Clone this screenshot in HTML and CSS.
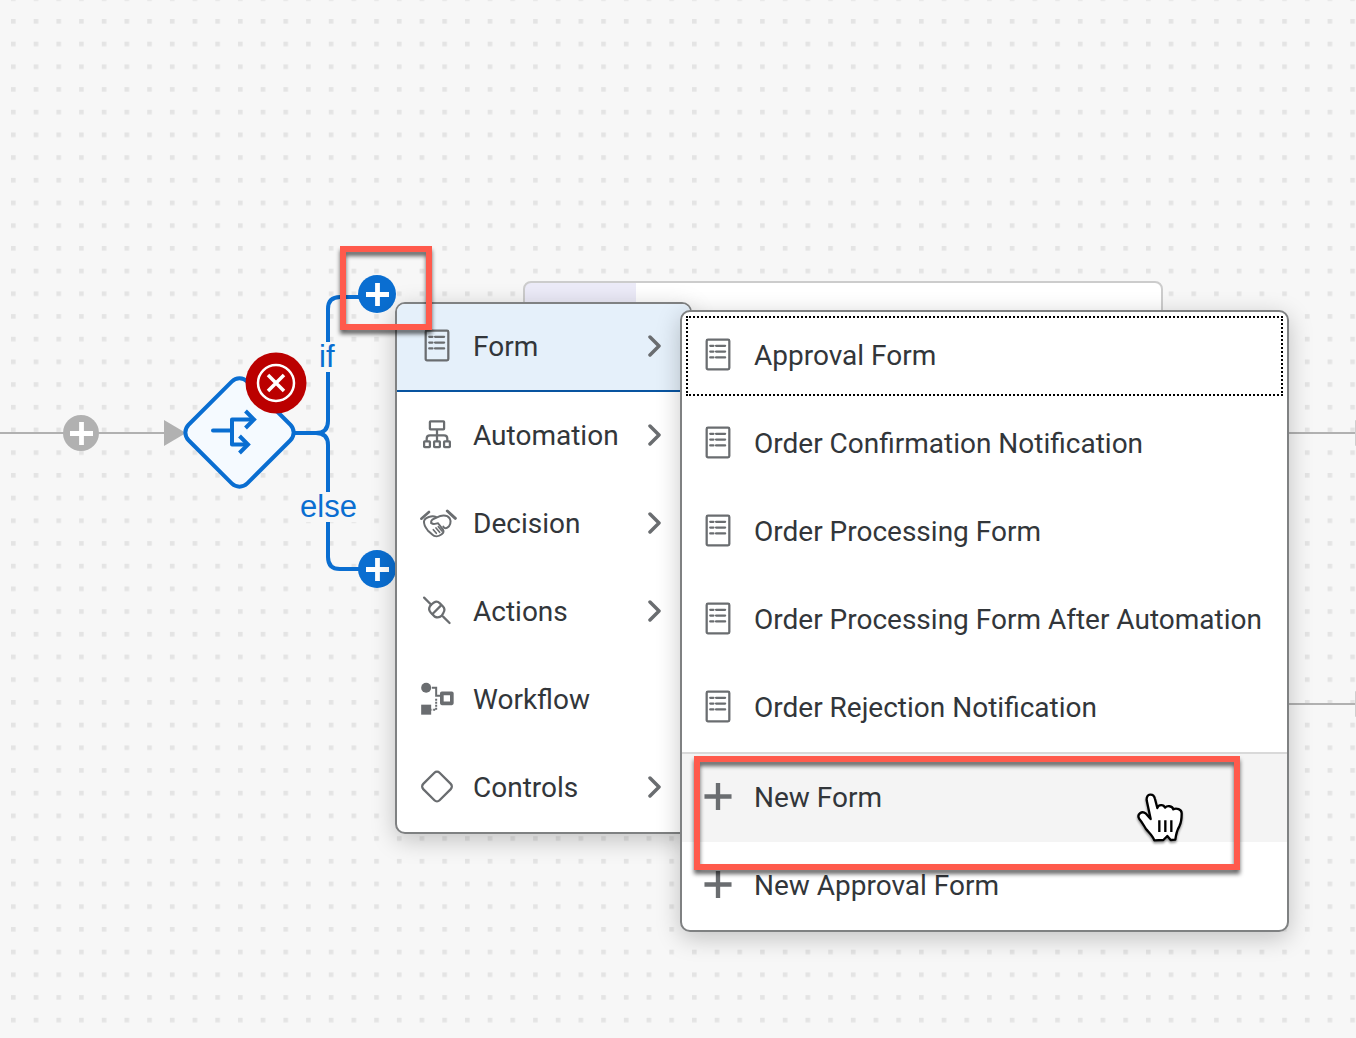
FILE: index.html
```html
<!DOCTYPE html>
<html lang="en">
<head>
<meta charset="utf-8">
<meta name="viewport" content="width=device-width, initial-scale=1">
<title>Process Builder</title>
<link rel="stylesheet" href="styles.css">
</head>
<body>
<svg class="sprite" aria-hidden="true">
  <symbol id="i-form" viewBox="0 0 78 102">
    <rect x="4" y="5" width="70" height="92" rx="4" fill="none" stroke="currentColor" stroke-width="7"/>
    <path d="M15 24h10M33 24h28M15 42h10M33 42h28M15 60h10M33 60h28" fill="none" stroke="currentColor" stroke-width="7" stroke-linecap="round"/>
  </symbol>
  <symbol id="i-automation" viewBox="0 0 90 90">
    <g fill="none" stroke="currentColor" stroke-width="7" stroke-linejoin="round">
      <rect x="23" y="4" width="44" height="25" rx="2"/>
      <path d="M45 29v37M13 66v-8q0-10 10-10h44q10 0 10 10v8"/>
      <rect x="5" y="66" width="18" height="18" rx="2"/>
      <rect x="36" y="66" width="18" height="18" rx="2"/>
      <rect x="67" y="66" width="18" height="18" rx="2"/>
    </g>
  </symbol>
  <symbol id="i-decision" viewBox="51 318 120 96">
    <g fill="none" stroke="currentColor" stroke-width="6" stroke-linecap="round" stroke-linejoin="round">
      <path d="M64 356L87 336" stroke-width="8"/>
      <path d="M142 333L166 355" stroke-width="9"/>
      <path d="M108 351C96 346 74 352 72 364C71 376 78 384 84 392L96 403C104 411 116 410 125 403C130 399 132 394 129 389L116 372"/>
      <path d="M94 369C90 360 102 356 111 352C122 346 140 342 149 355C155 366 150 378 142 383C137 386 133 385 130 380"/>
      <path d="M94 369C100 375 108 370 114 370"/>
      <path d="M100 389L109 400M108 384L119 397M115 380L126 393" stroke-width="5"/>
    </g>
  </symbol>
  <symbol id="i-actions" viewBox="0 0 90 90">
    <g fill="none" stroke="currentColor" stroke-width="7" stroke-linecap="round" stroke-linejoin="round">
      <path d="M5 5L27 27M64 64L84 84"/>
      <path d="M27 27L36 20Q45 14 54 23L63 32Q72 41 65 52L60 61Q50 70 38 64L26 52Q17 42 23 32Z"/>
      <path d="M57 30L31 56"/>
    </g>
  </symbol>
  <symbol id="i-workflow" viewBox="0 0 99 99">
    <circle cx="17" cy="17" r="15" fill="currentColor"/>
    <rect x="2" y="68" width="30" height="30" fill="currentColor"/>
    <rect x="64" y="34" width="30" height="30" fill="none" stroke="currentColor" stroke-width="11" stroke-linejoin="round"/>
    <path d="M34 17h13v24h14" fill="none" stroke="currentColor" stroke-width="6"/>
    <path d="M47 50v33h-14" fill="none" stroke="currentColor" stroke-width="6" stroke-dasharray="6 3"/>
  </symbol>
  <symbol id="i-controls" viewBox="0 0 100 100">
    <rect x="15" y="15" width="70" height="70" rx="11" transform="rotate(45 50 50)" fill="none" stroke="currentColor" stroke-width="7"/>
  </symbol>
  <symbol id="i-chevron" viewBox="0 0 14 24">
    <path d="M2 3L11 12L2 21" fill="none" stroke="currentColor" stroke-width="3.500" stroke-linecap="round" stroke-linejoin="round"/>
  </symbol>
  <symbol id="i-add" viewBox="0 0 30 30">
    <path d="M15 1v28M1 15h28" stroke="currentColor" stroke-width="4.500"/>
  </symbol>
  <symbol id="i-plus" viewBox="0 0 24 24">
    <path d="M12 0v24M0 12h24" stroke="currentColor" stroke-width="5"/>
  </symbol>
</svg>

<main class="canvas">
  <svg class="layer" aria-hidden="true">
    <defs>
      <pattern id="dots" width="227" height="227" patternUnits="userSpaceOnUse" patternTransform="translate(11 19) scale(.1)">
        <rect width="46" height="46" fill="#e4e4e4"/>
      </pattern>
    </defs>
    <rect width="100%" height="100%" fill="url(#dots)"/>
    <g stroke="#b1b1b1" stroke-width="2">
      <path d="M0 433H170M1280 433H1356M1280 704H1356"/>
    </g>
    <path d="M164 420L186 433L164 446Z" fill="#b1b1b1"/>
    <path d="M1355 420L1377 433L1355 446ZM1355 691L1377 704L1355 717Z" fill="#cfcfcf"/>
    <g fill="none" stroke="#0a6ed1" stroke-width="4">
      <path d="M293 433H316Q328 433 328 421V309Q328 297 340 297H362"/>
      <path d="M316 433Q328 433 328 445V557Q328 569 340 569H362"/>
    </g>
    <rect x="198" y="391" width="83" height="83" rx="11" transform="rotate(45 239.500 432.500)" fill="#f5faff" stroke="#0a6ed1" stroke-width="4"/>
    <g fill="none" stroke="#0a6ed1" stroke-width="4">
      <path d="M213 430.500H232" stroke-linecap="round"/>
      <path d="M252 419.500H232V444.500H246" stroke-linejoin="round"/>
      <path d="M245.500 411L254 419.500L245.500 428M239.500 436L248 444.500L239.500 453"/>
    </g>
  </svg>

  <span class="branch branch-if">if</span>
  <span class="branch branch-else">else</span>

  <button class="add add-muted" aria-label="Add step"><svg><use href="#i-plus"/></svg></button>
  <button class="add add-if" aria-label="Add step to if branch"><svg><use href="#i-plus"/></svg></button>
  <button class="add add-else" aria-label="Add step to else branch"><svg><use href="#i-plus"/></svg></button>

  <svg class="error" viewBox="0 0 62 62" role="img" aria-label="Error">
    <circle cx="31" cy="31" r="30.500" fill="#bb0000"/>
    <circle cx="31" cy="31" r="18" fill="none" stroke="#fff" stroke-width="2.500"/>
    <path d="M23 23L39 39M39 23L23 39" stroke="#fff" stroke-width="3.500"/>
  </svg>

  <div class="step"></div>

  <ul class="menu menu-main" role="menu">
    <li><button class="item selected" role="menuitem"><svg class="icon page"><use href="#i-form"/></svg><span class="label">Form</span><svg class="chevron"><use href="#i-chevron"/></svg></button></li>
    <li><button class="item" role="menuitem"><svg class="icon small"><use href="#i-automation"/></svg><span class="label">Automation</span><svg class="chevron"><use href="#i-chevron"/></svg></button></li>
    <li><button class="item" role="menuitem"><svg class="icon wide"><use href="#i-decision"/></svg><span class="label">Decision</span><svg class="chevron"><use href="#i-chevron"/></svg></button></li>
    <li><button class="item" role="menuitem"><svg class="icon small"><use href="#i-actions"/></svg><span class="label">Actions</span><svg class="chevron"><use href="#i-chevron"/></svg></button></li>
    <li><button class="item" role="menuitem"><svg class="icon page"><use href="#i-workflow"/></svg><span class="label">Workflow</span></button></li>
    <li><button class="item" role="menuitem"><svg class="icon page"><use href="#i-controls"/></svg><span class="label">Controls</span><svg class="chevron"><use href="#i-chevron"/></svg></button></li>
  </ul>

  <ul class="menu menu-sub" role="menu">
    <li><button class="item focused" role="menuitem"><svg class="icon page"><use href="#i-form"/></svg><span class="label">Approval Form</span></button></li>
    <li><button class="item" role="menuitem"><svg class="icon page"><use href="#i-form"/></svg><span class="label">Order Confirmation Notification</span></button></li>
    <li><button class="item" role="menuitem"><svg class="icon page"><use href="#i-form"/></svg><span class="label">Order Processing Form</span></button></li>
    <li><button class="item" role="menuitem"><svg class="icon page"><use href="#i-form"/></svg><span class="label">Order Processing Form After Automation</span></button></li>
    <li><button class="item" role="menuitem"><svg class="icon page"><use href="#i-form"/></svg><span class="label">Order Rejection Notification</span></button></li>
    <li class="divided"><button class="item hovered" role="menuitem"><svg class="icon small"><use href="#i-add"/></svg><span class="label">New Form</span></button></li>
    <li><button class="item" role="menuitem"><svg class="icon small"><use href="#i-add"/></svg><span class="label">New Approval Form</span></button></li>
  </ul>

  <div class="mark mark-add"></div>
  <div class="mark mark-new"></div>

  <svg class="pointer" viewBox="105 155 150 162" aria-hidden="true">
    <path d="M140 180C138 158 161 158 165 176L172 203C175 192 191 191 195 202C201 195 217 196 220 207C228 202 246 206 245 220C245 236 243 248 238 258C230 271 228 282 226 298L212 299L202 287L190 299L163 300C158 286 146 276 138 266C131 255 126 245 118 236C109 221 126 210 138 220L152 236Z" fill="#fff" stroke="#000" stroke-width="7" stroke-linejoin="round"/>
    <path d="M178 240V275M196 240V275M214 240V275" stroke="#000" stroke-width="7"/>
  </svg>
</main>
</body>
</html>
```
FILE: styles.css
```css
* { box-sizing: border-box; }

body {
  margin: 0;
  background: #f7f7f7;
  color: #32363a;
  font-family: Roboto, "Liberation Sans", sans-serif;
}

button {
  margin: 0;
  border: 0;
  background: none;
  color: inherit;
  font: inherit;
}

.sprite { position: absolute; width: 0; height: 0; }

.canvas {
  position: relative;
  min-height: 100vh;
  overflow: hidden;
}

.layer { position: absolute; inset: 0; width: 100%; height: 100%; }

.branch {
  position: absolute;
  background: #f7f7f7;
  color: #0a6ed1;
  font-family: "Liberation Sans", Arial, sans-serif;
  font-size: 31px;
  line-height: 30px;
}
.branch-if { left: 319px; top: 342px; }
.branch-else { left: 300px; top: 492px; }

.add {
  position: absolute;
  display: flex;
  align-items: center;
  justify-content: center;
  width: 38px;
  height: 38px;
  padding: 0;
  border-radius: 50%;
  background: #0a6ed1;
  color: #fff;
}
.add svg { width: 23px; height: 23px; }
.add-muted { left: 63px; top: 415px; width: 36px; height: 36px; background: #b1b1b1; }
.add-if { left: 358px; top: 275px; }
.add-else { left: 358px; top: 550px; }

.error { position: absolute; left: 245px; top: 352px; width: 62px; height: 62px; }

.step {
  position: absolute;
  left: 523px;
  top: 281px;
  width: 640px;
  height: 304px;
  border: 2px solid #ccc;
  border-radius: 8px;
  background: linear-gradient(90deg, #ecebf8 111px, #fff 111px);
}

.menu {
  position: absolute;
  margin: 0;
  padding: 0;
  border: 2px solid #7f8182;
  border-radius: 10px;
  background: #fff;
  box-shadow: 0 6px 24px rgba(0, 0, 0, .22);
  list-style: none;
  overflow: hidden;
}
.menu-main { left: 395px; top: 302px; width: 297px; }
.menu-sub { left: 680px; top: 310px; width: 609px; }

.item {
  display: flex;
  align-items: center;
  gap: 16px;
  width: 100%;
  height: 88px;
  padding: 0 28px 0 20px;
  font-size: 28px;
  line-height: 36px;
  text-align: left;
}
.menu-sub .item { padding: 0 16px; }
.selected { border-bottom: 2px solid #0854a0; background: #e5f0fa; }
.focused { outline: 2px dotted #000; outline-offset: -6px; }
.divided { border-top: 2px solid #d9d9d9; }
.hovered { background: #f4f4f4; }

.icon { flex: none; width: 40px; margin-bottom: 4px; color: #6a6d70; }
.page { height: 33px; }
.small { height: 29px; }
.wide { height: 32px; }
.label { flex: 1; white-space: nowrap; }
.chevron { flex: none; width: 14px; height: 24px; margin-bottom: 2px; color: #6a6d70; }

.mark {
  position: absolute;
  border: 6px solid #ff5a4c;
  filter: drop-shadow(0 4px 2px rgba(0, 0, 0, .6));
  pointer-events: none;
}
.mark-add { left: 340px; top: 246px; width: 92px; height: 84px; }
.mark-new { left: 694px; top: 756px; width: 546px; height: 114px; }

.pointer {
  position: absolute;
  left: 1135px;
  top: 792px;
  width: 50px;
  height: 54px;
  filter: drop-shadow(0 2px 1px rgba(0, 0, 0, .4));
}
```
